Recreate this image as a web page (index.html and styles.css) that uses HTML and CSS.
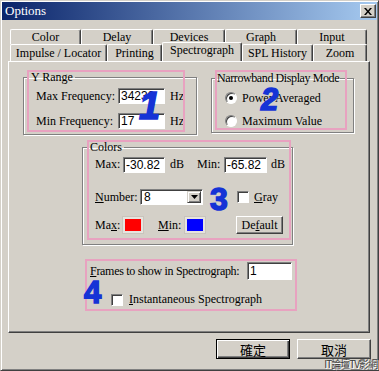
FILE: index.html
```html
<!DOCTYPE html>
<html lang="zh-Hant">
<head>
<meta charset="UTF-8">
<title>Options</title>
<link rel="stylesheet" href="styles.css">
</head>
<body>
<div class="window">
    <div class="titlebar">
        <span class="title">Options</span>
        <span class="close">
            <svg width="8" height="7" viewBox="0 0 8 7"><path d="M0 0h2l2 2.5L6 0h2L5 3.5 8 7H6L4 4.5 2 7H0l3-3.5z" fill="#000"/></svg>
        </span>
    </div>

    <div class="tabs">
        <div class="tab-row back">
            <div class="tab w71">Color</div>
            <div class="tab w72">Delay</div>
            <div class="tab w72">Devices</div>
            <div class="tab w72">Graph</div>
            <div class="tab w70">Input</div>
        </div>
        <div class="tab-row front">
            <div class="tab w97">Impulse / Locator</div>
            <div class="tab w55">Printing</div>
            <div class="tab w80 on">Spectrograph</div>
            <div class="tab w71">SPL History</div>
            <div class="tab w54">Zoom</div>
        </div>
    </div>

    <div class="panel">
        <div class="row-top">
            <fieldset class="group yrange">
                <legend>Y Range</legend>
                <div class="freq-grid">
                    <span class="lbl-right">Max Frequency:</span>
                    <span class="field w47">34239</span>
                    <span>Hz</span>
                    <span class="lbl-right">Min Frequency:</span>
                    <span class="field w47">17</span>
                    <span>Hz</span>
                </div>
            </fieldset>
            <fieldset class="group narrow">
                <legend>Narrowband Display Mode</legend>
                <div class="radios">
                    <div class="radio-row"><span class="radio checked"></span>Power Averaged</div>
                    <div class="radio-row"><span class="radio"></span>Maximum Value</div>
                </div>
            </fieldset>
        </div>

        <fieldset class="group colors">
            <legend>Colors</legend>
            <div class="colors-body">
                <div class="c-row r1">
                    <span class="lbl w28">Max:</span>
                    <span class="field w42">-30.82</span>
                    <span class="lbl w32 pl5">dB</span>
                    <span class="lbl w27">Min:</span>
                    <span class="field w43">-65.82</span>
                    <span class="lbl pl4">dB</span>
                </div>
                <div class="c-row r2">
                    <span class="lbl w45"><u>N</u>umber:</span>
                    <span class="combo"><span class="combo-val">8</span><span class="combo-btn"><svg width="7" height="4" viewBox="0 0 7 4"><path d="M0 0h7L3.5 4z" fill="#000"/></svg></span></span>
                    <span class="check ml34"></span>
                    <span class="lbl ml5"><u>G</u>ray</span>
                </div>
                <div class="c-row r3">
                    <span class="lbl w28">Ma<u>x</u>:</span>
                    <span class="swatch red"></span>
                    <span class="lbl w27 ml15"><u>M</u>in:</span>
                    <span class="swatch blue"></span>
                    <span class="btn small">De<u>f</u>ault</span>
                </div>
            </div>
        </fieldset>

        <div class="frames">
            <div class="f-row">
                <span class="f-label"><u>F</u>rames to show in Spectrograph:</span>
                <span class="field w45 tall">1</span>
            </div>
            <div class="f-row2">
                <span class="check"></span>
                <span class="ml6"><u>I</u>nstantaneous Spectrograph</span>
            </div>
        </div>

        <!-- annotation marks drawn over the dialog -->
        <div class="mark m1"></div>
        <div class="mark m2"></div>
        <div class="mark m3"></div>
        <span class="num n1">1</span>
        <span class="num n2">2</span>
        <span class="num n3">3</span>
        <span class="num n4">4</span>
    </div>

    <div class="buttons">
        <span class="btn big default">確定</span>
        <span class="btn big">取消</span>
    </div>

    <span class="watermark">IT論壇TV影網</span>
</div>
</body>
</html>
```

FILE: styles.css
```css
body {
    margin: 0;
    background: #d4d0c8;
    font-family: "Liberation Serif", serif;
    font-size: 12px;
    color: #000;
}

.window {
    position: relative;
    width: 379px;
    height: 371px;
    box-sizing: border-box;
    border: 1px solid;
    border-color: #d4d0c8 #404040 #404040 #d4d0c8;
    box-shadow: inset 1px 1px #fff, inset -1px -1px #808080;
    padding: 1px;
    display: flex;
    flex-direction: column;
}

/* title bar */
.titlebar {
    height: 18px;
    background: linear-gradient(to right, #0a246a, #a6caf0);
    display: flex;
    align-items: center;
    justify-content: space-between;
    padding: 0 1px 0 3px;
    color: #fff;
    font-size: 13px;
}

.close {
    width: 16px;
    height: 14px;
    box-sizing: border-box;
    background: #d4d0c8;
    border: 1px solid;
    border-color: #fff #404040 #404040 #fff;
    box-shadow: inset -1px -1px #808080;
    display: flex;
    align-items: center;
    justify-content: center;
}

/* tabs */
.tabs {
    margin: 9px 0 0 8px;
}

.tab-row {
    display: flex;
    align-items: flex-start;
}

.back { height: 15px; }
.front { height: 17px; }

.tab {
    box-sizing: border-box;
    border-left: 1px solid #fff;
    border-top: 1px solid #fff;
    border-right: 1px solid #404040;
    box-shadow: inset -1px 0 #808080;
    border-radius: 2px 2px 0 0;
    text-align: center;
    background: #d4d0c8;
    white-space: nowrap;
}

.back .tab { height: 15px; line-height: 14px; }
.front .tab { height: 17px; line-height: 16px; }

.front .tab.on {
    position: relative;
    z-index: 1;
    height: 19px;
    margin-top: -2px;
    line-height: 15px;
}

.w54 { width: 54px; }
.w55 { width: 55px; }
.w70 { width: 70px; }
.w71 { width: 71px; }
.w72 { width: 72px; }
.w80 { width: 80px; }
.w97 { width: 97px; }

/* tab page */
.panel {
    position: relative;
    width: 362px;
    height: 272px;
    margin-left: 6px;
    box-sizing: border-box;
    border: 1px solid;
    border-color: #fff #404040 #404040 #fff;
    box-shadow: inset -1px -1px #808080;
    padding: 8px 0 0 14px;
}

.row-top {
    display: flex;
    align-items: flex-start;
    gap: 14px;
}

.group {
    margin: 0;
    padding: 0;
    box-sizing: border-box;
    border: 1px solid #808080;
    box-shadow: 1px 1px 0 #fff, inset 1px 1px 0 #fff;
}

.group legend {
    margin-left: 5px;
    padding: 0 2px;
    line-height: 14px;
    white-space: nowrap;
}

.yrange {
    width: 174px;
    height: 65px;
}

.freq-grid {
    display: grid;
    grid-template-columns: 77px 47px auto;
    column-gap: 5px;
    row-gap: 9px;
    align-items: center;
    padding: 4px 0 0 12px;
}

.lbl-right { text-align: right; white-space: nowrap; }

.narrow {
    width: 143px;
    height: 62px;
    margin-top: 1px;
}

.narrow legend {
    letter-spacing: -0.4px;
    padding: 0 1px;
    margin-left: 4px;
}

.radios {
    display: flex;
    flex-direction: column;
    gap: 7px;
    padding: 5px 0 0 13px;
}

.radio-row {
    display: flex;
    align-items: center;
    gap: 5px;
    height: 16px;
    white-space: nowrap;
}

.radio {
    width: 12px;
    height: 12px;
    box-sizing: border-box;
    border-radius: 50%;
    border: 1px solid;
    border-color: #808080 #fff #fff #808080;
    box-shadow: inset 1px 1px #404040;
    background: #fff;
    display: flex;
    align-items: center;
    justify-content: center;
}

.radio.checked::after {
    content: "";
    width: 4px;
    height: 4px;
    border-radius: 50%;
    background: #000;
}

/* input fields */
.field {
    display: inline-block;
    box-sizing: border-box;
    height: 16px;
    background: #fff;
    border: 1px solid;
    border-color: #808080 #fff #fff #808080;
    box-shadow: inset 1px 1px #404040;
    font-family: "Liberation Sans", sans-serif;
    font-size: 12px;
    line-height: 14px;
    padding-left: 2px;
}

.field.tall { height: 18px; line-height: 16px; flex: none; }

.w27 { width: 27px; }
.w28 { width: 28px; }
.w32 { width: 32px; }
.w42 { width: 42px; }
.w43 { width: 43px; }
.w45 { width: 45px; }
.w47 { width: 47px; }

.pl4 { padding-left: 4px; }
.pl5 { padding-left: 5px; box-sizing: border-box; }
.ml5 { margin-left: 5px; }
.ml6 { margin-left: 6px; }
.ml15 { margin-left: 15px; }
.ml34 { margin-left: 34px; }

/* colors group */
.colors {
    width: 211px;
    height: 105px;
    margin: 5px 0 0 59px;
}

.colors-body {
    padding: 3px 0 0 12px;
}

.c-row {
    display: flex;
    align-items: center;
}

.c-row .lbl { white-space: nowrap; }
.r1 { height: 15px; }
.r2 { height: 16px; margin-top: 17px; }
.r3 { height: 18px; margin-top: 11px; }

.combo {
    display: flex;
    width: 63px;
    height: 16px;
    box-sizing: border-box;
    background: #fff;
    border: 1px solid;
    border-color: #808080 #fff #fff #808080;
    box-shadow: inset 1px 1px #404040;
    padding: 1px;
}

.combo-val {
    flex: 1;
    font-family: "Liberation Sans", sans-serif;
    line-height: 13px;
    padding-left: 2px;
}

.combo-btn {
    width: 14px;
    box-sizing: border-box;
    background: #d4d0c8;
    border: 1px solid;
    border-color: #d4d0c8 #404040 #404040 #d4d0c8;
    box-shadow: inset 1px 1px #fff, inset -1px -1px #808080;
    display: flex;
    align-items: center;
    justify-content: center;
}

.check {
    display: inline-block;
    flex: none;
    width: 12px;
    height: 12px;
    box-sizing: border-box;
    background: #fff;
    border: 1px solid;
    border-color: #808080 #fff #fff #808080;
    box-shadow: inset 1px 1px #404040;
}

.swatch {
    width: 16px;
    height: 12px;
    border: 2px solid #e6e3de;
    box-shadow: 0 0 0 1px #c8c4bc;
}

.red { background: #ff0000; }
.blue { background: #0000ff; }

/* buttons */
.btn {
    display: inline-flex;
    align-items: center;
    justify-content: center;
    box-sizing: border-box;
    background: #d4d0c8;
    border: 1px solid;
    border-color: #fff #404040 #404040 #fff;
    box-shadow: inset -1px -1px #808080;
}

.btn.small {
    width: 47px;
    height: 18px;
    margin-left: 31px;
}

.frames {
    width: 212px;
    height: 52px;
    box-sizing: border-box;
    margin: 14px 0 0 62px;
    border: 2px solid #e8a2c0;
    padding: 1px 3px 0 3px;
}

.f-row {
    display: flex;
    justify-content: space-between;
    align-items: center;
}

.f-label {
    white-space: nowrap;
    letter-spacing: -0.3px;
}

.f-row2 {
    display: flex;
    align-items: center;
    margin: 12px 0 0 21px;
    white-space: nowrap;
}

.buttons {
    display: flex;
    justify-content: flex-end;
    gap: 7px;
    margin-top: 6px;
    padding-right: 6px;
}

.btn.big {
    width: 74px;
    height: 20px;
    font-family: "Noto Sans CJK TC", sans-serif;
    font-size: 13px;
}

.btn.default {
    border-color: #000;
    box-shadow: inset 1px 1px #fff, inset -1px -1px #404040, inset -2px -2px #808080;
}

/* annotations */
.mark {
    position: absolute;
    border: 2px solid #e8a2c0;
    box-sizing: border-box;
}

.m1 { left: 18px; top: 8px; width: 158px; height: 62px; }
.m2 { left: 206px; top: 8px; width: 132px; height: 60px; }
.m3 { left: 78px; top: 78px; width: 204px; height: 100px; }

.num {
    position: absolute;
    font-family: "Liberation Sans", sans-serif;
    font-weight: bold;
    line-height: 1;
    color: #1533d6;
    -webkit-text-stroke: 1.5px #1533d6;
}

.n1 { left: 130px; top: 25px; font-size: 38px; font-style: italic; }
.n2 { left: 252px; top: 22px; font-size: 31px; font-style: italic; }
.n3 { left: 201px; top: 121px; font-size: 32px; }
.n4 { left: 75px; top: 215px; font-size: 31px; }

.watermark {
    position: absolute;
    right: 1px;
    bottom: 0;
    font-family: "Noto Sans CJK TC", sans-serif;
    font-size: 10px;
    line-height: 12px;
    color: #3a3a3a;
    text-shadow: 1px 1px #fff;
    letter-spacing: -1px;
}
```
